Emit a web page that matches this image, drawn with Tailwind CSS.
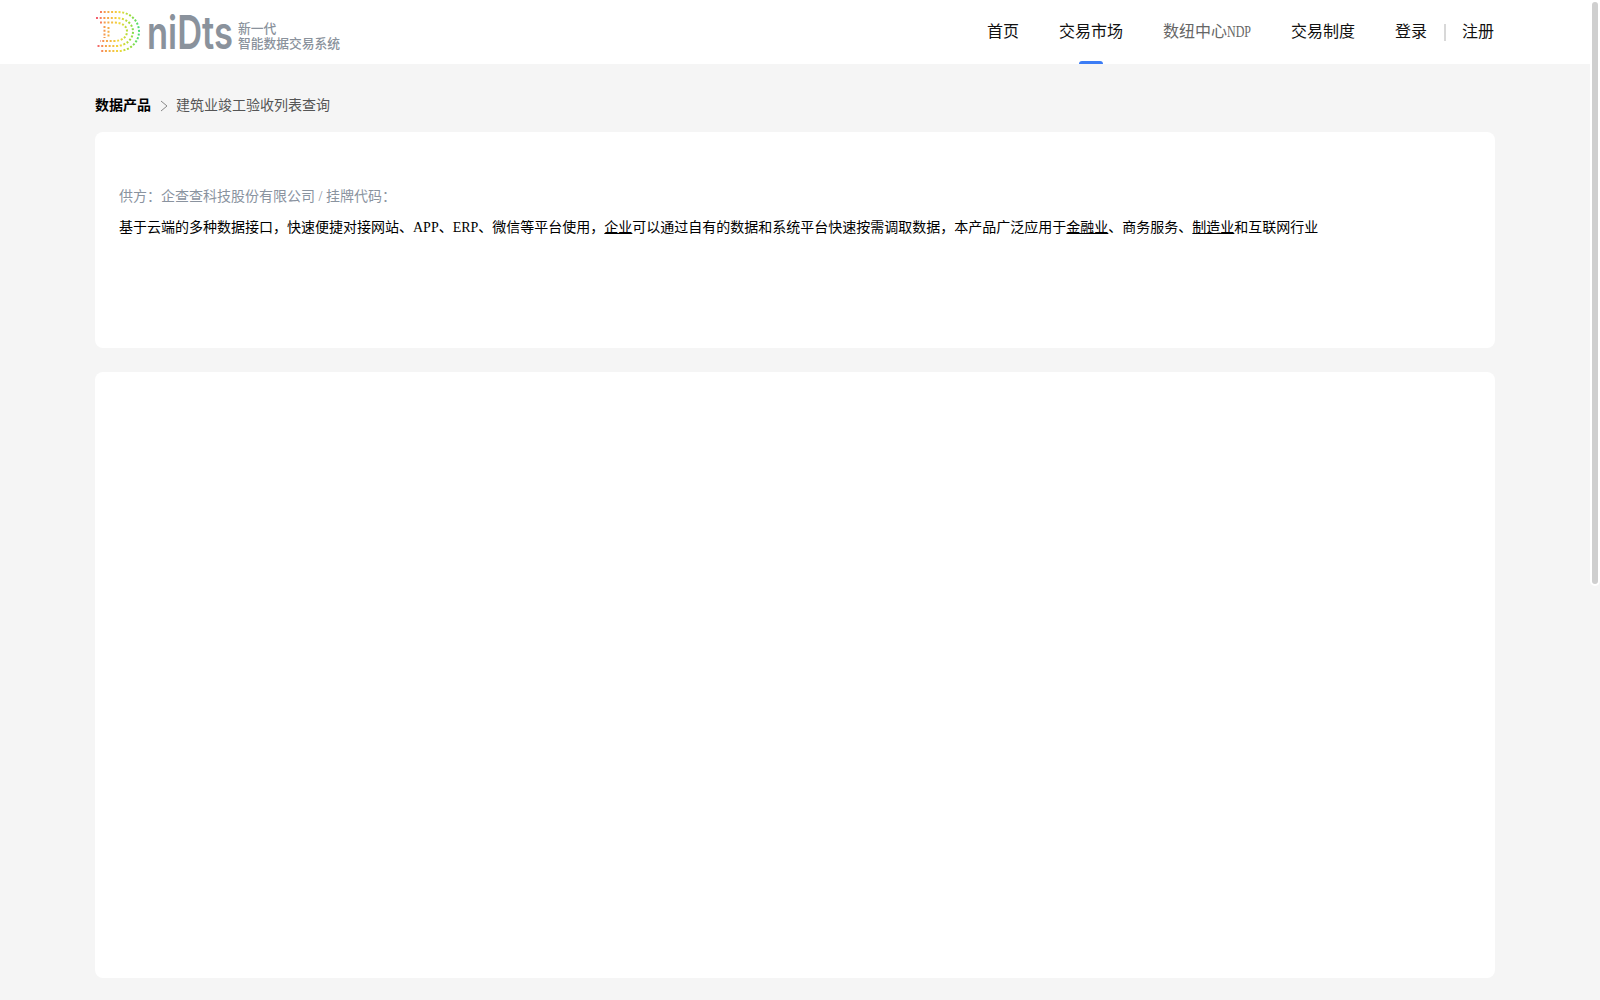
<!DOCTYPE html>
<html lang="zh-CN">
<head>
<meta charset="utf-8">
<script src="https://cdn.jsdelivr.net/npm/@tailwindcss/browser@4"></script>
<title>建筑业竣工验收列表查询</title>
</head>
<body class="bg-[#f5f5f5] font-['Liberation_Serif','Noto_Sans_CJK_SC',serif]">
<div class="relative h-[1000px] overflow-hidden">
  <header class="h-16 bg-white">
    <div class="ml-[94px] mr-[106px] h-16 flex items-center justify-between">
      <div class="flex items-center text-[#8a929c]">
        <svg width="48" height="44" viewBox="0 0 48 44" fill="none">
          <defs>
            <linearGradient id="dotGrad" gradientUnits="userSpaceOnUse" x1="0" y1="0" x2="46" y2="0">
              <stop offset="0" stop-color="#f2487a"/>
              <stop offset=".25" stop-color="#f6a24a"/>
              <stop offset=".55" stop-color="#f2d93a"/>
              <stop offset=".8" stop-color="#9bdc3a"/>
              <stop offset="1" stop-color="#3edc7a"/>
            </linearGradient>
          </defs>
          <g stroke="url(#dotGrad)" stroke-width="2" stroke-dasharray="2 1.7">
            <path d="M6 2H24C36 2 45 11 45 21.5S36 41 24 41H6"/>
            <path d="M2 8H22C32 8 39 14 39 21.5S32 36 22 36H2"/>
            <path d="M6 12.5H20C28 12.5 33 16 33 21.5S28 31 20 31H6"/>
            <path d="M10.5 16V28M14.5 17V27"/>
          </g>
        </svg>
        <span class="inline-block w-[87px] ml-[5px] origin-left scale-x-[.75] font-['Inter'] font-semibold text-[46px] leading-none text-[#8a929c]">niDts</span>
        <div class="ml-[4px] mt-[5px] font-['Noto_Sans_CJK_SC'] text-[12.75px] leading-[15px] font-medium">
          <div>新一代</div>
          <div>智能数据交易系统</div>
        </div>
      </div>
      <nav class="flex items-center text-base text-[#111]">
        <a class="mr-10">首页</a>
        <a class="relative mr-10 h-16 leading-16">交易市场<span class="absolute bottom-0 left-[20px] w-6 h-[3px] rounded-t-sm bg-[#3b7cf5]"></span></a>
        <a class="mr-10 text-[#666] flex items-center">数纽中心<span class="inline-block w-6 origin-left scale-x-[.75]">NDP</span></a>
        <a class="mr-10">交易制度</a>
        <a>登录</a>
        <span class="w-[2px] h-[17px] bg-[#d8d8d8] ml-[17px] mr-4"></span>
        <a>注册</a>
      </nav>
    </div>
  </header>
  <main class="ml-[95px] mr-[105px]">
    <div class="h-[68px] pt-4 flex items-center text-sm">
      <span class="font-bold text-black">数据产品</span>
      <svg class="ml-[9px] mr-2" width="8" height="12" viewBox="0 0 8 12" fill="none" stroke="#888" stroke-width="1"><path d="M1 1l6 5-6 5"/></svg>
      <span class="text-[#555]">建筑业竣工验收列表查询</span>
    </div>
    <section class="h-[216px] bg-white rounded-lg px-6 pt-[55px] text-sm">
      <div class="text-[#8a939f] leading-5">供方：<span>企查查科技股份有限公司</span> / 挂牌代码：</div>
      <p class="mt-[11px] leading-5 text-black">基于云端的多种数据接口，快速便捷对接网站、APP、ERP、微信等平台使用，<u>企业</u>可以通过自有的数据和系统平台快速按需调取数据，本产品广泛应用于<u>金融业</u>、商务服务、<u>制造业</u>和互联网行业</p>
    </section>
    <section class="mt-6 h-[606px] bg-white rounded-lg"></section>
  </main>
  <div class="absolute right-0 top-0 w-[10px] h-[586px] rounded-[5px] border-2 border-white bg-[#cfcfcf]"></div>
</div>
</body>
</html>
